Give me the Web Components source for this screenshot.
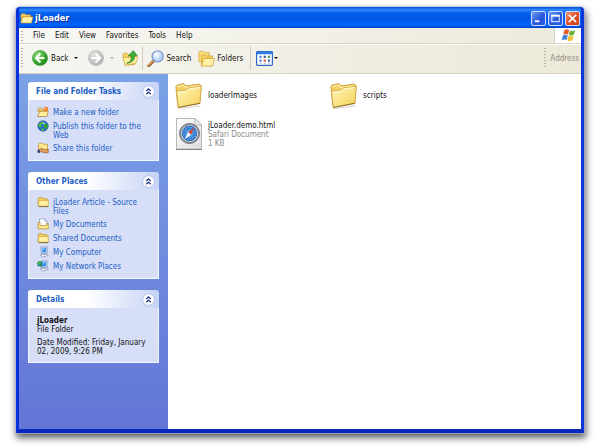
<!DOCTYPE html>
<html lang="en">
<head>
<meta charset="utf-8">
<title>jLoader</title>
<style>
  html, body { margin: 0; background: #fff; }
  body {
    min-height: 100vh; box-sizing: border-box; padding: 7px 16px 13px 16px;
    display: flex; flex-direction: column;
    font: 8px/9px "DejaVu Sans Condensed", "DejaVu Sans", sans-serif; color: #111;
  }
</style>
</head>
<body>
<xp-window>
  <xp-titlebar slot="title">jLoader</xp-titlebar>
  <xp-menubar slot="bars">
    <button>File</button><button>Edit</button><button>View</button><button>Favorites</button><button>Tools</button><button>Help</button>
  </xp-menubar>
  <xp-toolbar slot="bars"></xp-toolbar>
  <xp-panel slot="side" heading="File and Folder Tasks">
    <xp-link icon="newfolder">Make a new folder</xp-link>
    <xp-link icon="globe">Publish this folder to the Web</xp-link>
    <xp-link icon="share">Share this folder</xp-link>
  </xp-panel>
  <xp-panel slot="side" heading="Other Places">
    <xp-link icon="smallfolder">jLoader Article - Source Files</xp-link>
    <xp-link icon="docs">My Documents</xp-link>
    <xp-link icon="smallfolder">Shared Documents</xp-link>
    <xp-link icon="computer">My Computer</xp-link>
    <xp-link icon="network">My Network Places</xp-link>
  </xp-panel>
  <xp-panel slot="side" heading="Details">
    <xp-details name="jLoader" kind="File Folder">Date Modified: Friday, January 02, 2009, 9:26 PM</xp-details>
  </xp-panel>
  <xp-file icon="folder" name="loaderImages"></xp-file>
  <xp-file icon="folder" name="scripts"></xp-file>
  <xp-file icon="safari" name="jLoader.demo.html" kind="Safari Document" size="1 KB"></xp-file>
</xp-window>

<script>
const folderSmall = `
  <path d="M1.500 4 2.500 2h4l1.500 1.500h5.500l1 1.500v8.500H1.500z" fill="#f2cf63" stroke="#b58a2c" stroke-width=".9"/>
  <path d="M2.500 6h12.500v7.500H2z" fill="#fff0a3" stroke="#d0a33c" stroke-width=".8"/>
  <path d="M2.500 14.200h12.500" stroke="#70521a" stroke-width="1"/>`;
const monitor = `
  <path d="M5 1.500 13.500 1v8.500L6 10.500z" fill="#cfdcf2" stroke="#7388b0" stroke-width=".9"/>
  <path d="M6.500 3 12 2.600v5.400L7 8.800z" fill="#2e8ef0"/>
  <path d="M7 3.200 11 2.900 7.300 7z" fill="#8fd0ff"/>
  <path d="M4 12 12 10.500l3 2-8 2.500z" fill="#e8edf6" stroke="#6f7d98" stroke-width=".8"/>`;
const icons = {
  titlefolder: [16, `
    <path d="M1 4 2 2h4l1.500 1.500H13V6H1z" fill="#f7d36a" stroke="#c98d1f" stroke-width=".8"/>
    <path d="M1 13.500 3.500 6H16l-2 7.500z" fill="#fff2a8" stroke="#d39b28" stroke-width=".8"/>
    <path d="M1 4v9l2-7" fill="#e9b540"/>`],
  smallfolder: [16, folderSmall],
  newfolder: [16, `
    <path d="M1 5 2.500 3h4L8 4.500h5V7H1z" fill="#f4d169" stroke="#a87b25" stroke-width=".8"/>
    <path d="M1 14 3.500 7H15l-2 7z" fill="#ffef9e" stroke="#a87b25" stroke-width=".9"/>
    <circle cx="12" cy="4" r="3" fill="#f1732c"/><circle cx="11.500" cy="3.500" r="1.300" fill="#ffd28a"/>`],
  globe: [16, `
    <circle cx="8" cy="8" r="7" fill="#2565d2" stroke="#1b4893" stroke-width=".7"/>
    <path d="M3 4.500Q6 1 9 2.500L8 5 5.500 6 6.500 9 4 10 1.500 8z" fill="#4cc040"/>
    <path d="M10 4l3.500 1 1 4-2 3.500-2.500-2L8.500 8z" fill="#35a334"/>
    <path d="M5 11.500 8.500 11l1 3-3 .5z" fill="#4cc040"/><circle cx="9" cy="4.500" r="1.300" fill="#bfe3ff"/>`],
  share: [16, `
    <path d="M2 3 3 1.500h4L8.500 3H14v8H2z" fill="#ffe98c" stroke="#b58a2c" stroke-width=".9"/>
    <path d="M1 11.500 4 9h4l3 1.500 4-1V14l-5 .5-4-1.500H1z" fill="#e8a05a" stroke="#7a4a22" stroke-width=".8"/>
    <path d="M1 10.500h3v4H1z" fill="#3b4a7c"/>`],
  docs: [16, `
    <path d="M3.500 1h6.500l3 3v8h-9.500z" fill="#fff" stroke="#7f92b8" stroke-width=".9"/>
    <path d="M10 1v3h3" fill="#cfdcf2" stroke="#7f92b8" stroke-width=".7"/>
    <path d="M1.500 6H4v4h9V7h2v7.500H1.500z" fill="#ffe98c" stroke="#b0822a" stroke-width=".9"/>`],
  computer: [16, monitor],
  network: [16, `${monitor}
    <circle cx="4" cy="5" r="3.800" fill="#2a7bd0"/><path d="M1 3Q4 0 6 2L5 5 3 6.500 1 6z" fill="#46b53c"/>
    <path d="M3 7 6 5.500 7 8l-2 1z" fill="#2f8f2f"/>`],
  folder: [32, `
    <defs><linearGradient id="f" x2="1" y2="1"><stop stop-color="#fff8b8"/><stop offset="1" stop-color="#f4d05a"/></linearGradient></defs>
    <path d="M3 31 30 27.500V29L4 32z" fill="#c9c4b6" opacity=".7"/>
    <path d="M1 5.500 2.500 3.500 10.500 1.800 13 4.500 29 2.500 31 4.500 29.500 25 3.500 29.500z" fill="#f3cf63" stroke="#c89a35" stroke-width="1"/>
    <path d="M2.500 5.500 10 3.800 12.500 6.500 28.500 4.300" fill="none" stroke="#fff3b0" stroke-width="1.200"/>
    <path d="M2 12.500Q2 11.300 3.200 11L13 9.600l3-2.600L30 5.200l1 1L29.500 25 4 30z" fill="url(#f)" stroke="#d0a13a" stroke-width=".9"/>
    <path d="M3.200 12.300 13.500 10.800 16.500 8.200 29.500 6.500" fill="none" stroke="#fffde0" stroke-width="1"/>
    <path d="M4 30.300 29.700 25.300" stroke="#80641f" stroke-width="1"/>`],
  safari: [32, `
    <defs><radialGradient id="s"><stop stop-color="#74c4f7"/><stop offset="1" stop-color="#1d62bd"/></radialGradient>
    <linearGradient id="p" x2="1" y2="1"><stop stop-color="#fff"/><stop offset="1" stop-color="#dcdcdc"/></linearGradient></defs>
    <path d="M3.500.500H22l6.500 6.500V31H3.500z" fill="url(#p)" stroke="#b8b8b8"/>
    <path d="M3 31.500H29" stroke="#858585"/>
    <path d="M22 .500v6.500h6.500z" fill="#f4f4f4" stroke="#a8a8a8" stroke-width=".8"/>
    <circle cx="16.500" cy="15.500" r="10" fill="#858b93" stroke="#60666e" stroke-width=".8"/>
    <circle cx="16.500" cy="15.500" r="8.600" fill="#d6dde4"/>
    <circle cx="16.500" cy="15.500" r="7.700" fill="url(#s)"/>
    <circle cx="16.500" cy="15.500" r="6.200" fill="none" stroke="#d8efff" stroke-width="1" stroke-dasharray=".8 1.900"/>
    <path d="M21.500 9.500 17.800 16.800 15.200 14.200z" fill="#e33b2e"/><path d="M11.500 21.500 15.200 14.200l2.600 2.600z" fill="#fff"/>`],
  back: [20, `
    <defs><radialGradient id="b" cx=".35" cy=".3" r=".8"><stop stop-color="#8fe07c"/><stop offset=".6" stop-color="#36a82c"/><stop offset="1" stop-color="#1c7d1a"/></radialGradient></defs>
    <circle cx="10" cy="10" r="9.500" fill="url(#b)" stroke="#2b8a2a" stroke-width=".6"/>
    <path d="M10.500 4.500 5 10l5.500 5.500M5.500 10h10" fill="none" stroke="#fff" stroke-width="2.600"/>`],
  forward: [20, `
    <defs><radialGradient id="b" cx=".35" cy=".3" r=".8"><stop stop-color="#e2e2e0"/><stop offset="1" stop-color="#adadab"/></radialGradient></defs>
    <circle cx="10" cy="10" r="9.500" fill="url(#b)" stroke="#a9a9a6" stroke-width=".6"/>
    <path d="M9.500 4.500 15 10l-5.500 5.500M14.500 10h-10" fill="none" stroke="#fff" stroke-width="2.600"/>`],
  up: [20, `
    <path d="M1 5 6 3.500 8 5.500 17 5l-1 13L4 19z" fill="#f4d365" stroke="#c6982f" stroke-width=".8"/>
    <path d="M1 9 4 19l13-2 3-9-9 1.500z" fill="#fff0a0" stroke="#c6982f" stroke-width=".8"/>
    <path d="M6 16.500Q12.500 15 11.800 7.500H8L14 .800 19 7h-3.500Q16 15.500 6 16.500z" fill="#3fb534" stroke="#1d7c1c" stroke-width=".9"/>`],
  search: [20, `
    <defs><radialGradient id="g" cx=".4" cy=".35"><stop stop-color="#fff"/><stop offset="1" stop-color="#b5d3fa"/></radialGradient></defs>
    <path d="M8 12.500 2 18.500" stroke="#8c5a2c" stroke-width="3.400" stroke-linecap="round"/>
    <path d="M7.500 12.500 1.800 18" stroke="#eeb06a" stroke-width="1.500" stroke-linecap="round"/>
    <circle cx="12.500" cy="7.500" r="6.500" fill="url(#g)" stroke="#8a9cd0" stroke-width="1.600"/>`],
  folders: [20, `
    <path d="M1 3 2 1.500h4L7.500 3H13v11H1z" fill="#fbe07c" stroke="#cf9f38" stroke-width=".8"/>
    <path d="M4 19V7l1-1.500h4L10.500 7H17v3" fill="#f6cf5e" stroke="#cf9f38" stroke-width=".8"/>
    <path d="M4 19 7 10h12.500L17 19z" fill="#fff2a6" stroke="#cf9f38" stroke-width=".9"/>`],
  views: [20, `
    <rect x=".7" y="2" width="18.600" height="16" rx="1" fill="#fff" stroke="#2f66c8" stroke-width="1.400"/>
    <path d="M1 3.500h18" stroke="#2f7be6" stroke-width="3"/>
    <g stroke-width="2.600"><path d="M4 8h2.600M4 12.500h2.600" stroke="#4f86d8"/><path d="M9 8h2.600" stroke="#39588f"/><path d="M9 12.500h2.600" stroke="#de5b33"/><path d="M14 8h2.600" stroke="#4d9c50"/><path d="M14 12.500h2.600" stroke="#3c63b4"/></g>
    <path d="M4 15.500h2.600M9 15.500h2.600M14 15.500h2.600" stroke="#9db0d0"/>`],
  windows: [20, `
    <path d="M4.500 3Q7.500.500 11 2.700L9.300 8.700Q6 7 2.800 9z" fill="#e8592b"/>
    <path d="M12 3.200q3.500 1.800 7-.4L17.200 9q-3.400 2-6.800.2z" fill="#6cb33e"/>
    <path d="M2.500 10.200q3-2 6.500-.3L7.300 16Q4 14.300.800 16.300z" fill="#3f82dc"/>
    <path d="M10 10.300q3.400 1.900 6.900-.2L15.200 16.300q-3.500 2-6.900.2z" fill="#f5bf2e"/>`],
  chevrons: [14, `
    <circle cx="7" cy="7" r="6.300" fill="#fff" stroke="#b0bfe4" stroke-width="1"/>
    <path d="M4.500 6.500 7 4.200 9.500 6.500M4.500 10 7 7.700 9.500 10" fill="none" stroke="#2c3f8c" stroke-width="1.400"/>`],
  minimize: [12, `<path d="M2 9h5" stroke="#fff" stroke-width="2"/>`],
  maximize: [12, `<rect x="2" y="2.500" width="8" height="7" fill="none" stroke="#fff"/><path d="M1.500 3h9" stroke="#fff" stroke-width="2"/>`],
  close: [12, `<path d="M2 2l8 8M10 2l-8 8" stroke="#fff" stroke-width="1.800"/>`]
};

function define(tag, render) {
  customElements.define(tag, class extends HTMLElement {
    connectedCallback() {
      if (this.shadowRoot) return;
      this.attachShadow({ mode: "open" }).innerHTML = render(this);
    }
  });
}

const reset = `*{box-sizing:border-box} button{font:inherit;color:inherit;background:none;border:0;padding:0;margin:0;display:flex;align-items:center;white-space:nowrap}`;
const grip = `.grip{width:2px;align-self:stretch;background:repeating-linear-gradient(#b9b6a6 0 1px,transparent 1px 3px)}`;

define("xp-icon", el => {
  const [size, art] = icons[el.getAttribute("name")];
  return `<style>:host{display:block;flex:none;width:var(--s,12px);height:var(--s,12px)} svg{display:block;width:100%;height:100%}</style>
    <svg viewBox="0 0 ${size} ${size}" aria-hidden="true">${art}</svg>`;
});

define("xp-window", () => `<style>${reset}
  :host{flex:1;display:flex;flex-direction:column;box-sizing:border-box;background:#0a4be0;
    border:solid #0831d9;border-width:0 3px 4px;border-right-color:#0938d8;border-bottom-color:#0a28bd;border-radius:4px 4px 0 0;
    box-shadow:0 0 0 1px rgba(170,180,220,.6),1px 4px 7px 1px rgba(0,0,0,.62)}
  .main{flex:1;display:flex;background:#fff}
  aside{width:149px;flex:none;padding:8px 9px 20px;display:flex;flex-direction:column;gap:11px;
    background:linear-gradient(#7ba2e7,#6375d6)}
  main{flex:1;display:grid;grid-template-columns:repeat(auto-fill,155px);grid-auto-rows:32px;row-gap:7px;align-content:start;padding:5px 7px}
  </style>
  <slot name="title"></slot><slot name="bars"></slot>
  <div class="main"><aside><slot name="side"></slot></aside><main><slot></slot></main></div>`);

define("xp-titlebar", () => `<style>${reset}
  :host{display:flex;align-items:center;gap:2px;height:21px;box-sizing:border-box;padding:2px 1px 0;border-radius:4px 4px 0 0;
    background:linear-gradient(#0a4fd0,#2f8bff 3px,#0560f0 6px,#0057e5 12px,#0066ff 18px,#0043c8);
    color:#fff;font-size:9px;font-weight:bold;text-shadow:1px 1px #0b2f93}
  span{flex:1}
  xp-icon{--s:13px}
  button{width:15px;height:15px;justify-content:center;border:1px solid #cfdcff;border-radius:2px;background:linear-gradient(135deg,#6f9bf5,#2456d8 60%,#2d62e8)}
  button xp-icon{--s:11px}
  .close{background:linear-gradient(135deg,#f09a7c,#dd5227 50%,#c84018)}
  .controls{display:flex;gap:2px}
  </style><xp-icon name="titlefolder"></xp-icon><span><slot></slot></span>
  <div class="controls"><button aria-label="Minimize"><xp-icon name="minimize"></xp-icon></button>
  <button aria-label="Maximize"><xp-icon name="maximize"></xp-icon></button>
  <button class="close" aria-label="Close"><xp-icon name="close"></xp-icon></button></div>`);

define("xp-menubar", () => `<style>${reset}${grip}
  :host{display:flex;align-items:center;height:16px;background:linear-gradient(90deg,#f7f7f4,#edeadb);border-bottom:1px solid #d8d4c2;box-sizing:border-box}
  .grip{margin:3px 10px 2px 2px}
  nav{flex:1;display:flex;gap:10px}
  ::slotted(button){font:inherit;color:inherit;background:none;border:0;padding:0;margin:0}
  .logo{align-self:stretch;display:flex;align-items:center;justify-content:center;width:27px;background:#fff;border-left:1px solid #d8d4c2}
  .logo xp-icon{--s:15px}
  </style><i class="grip"></i><nav><slot></slot></nav><div class="logo"><xp-icon name="windows"></xp-icon></div>`);

define("xp-toolbar", () => `<style>${reset}${grip}
  :host{display:flex;align-items:center;height:30px;box-sizing:border-box;padding:0 2px 2px 2px;
    background:linear-gradient(90deg,#f5f5f2,#ece9d8);border-top:1px solid #fff;border-bottom:1px solid #d8d2bd}
  .grip{margin:3px 0}
  button{gap:3px}
  xp-icon{--s:16px}
  .arrow{width:0;height:0;border:solid transparent;border-width:2px 2px 0;border-top-color:#111}
  .off{border-top-color:#b8b5a8}
  .sep{width:1px;align-self:stretch;margin:1px 0;background:#d0ccba}
  .back{margin-left:9px}.back .arrow{margin-left:3px}
  .fwd{margin-left:10px;gap:6px}.up{margin:0 4px 0 8px}
  .search,.folders{gap:2px}
  .search{margin-left:4px}.folders{margin:0 7px}.views{margin-left:5px;gap:1px}
  .views xp-icon,.folders xp-icon,.search xp-icon{--s:17px}
  .space{flex:1}
  .address{color:#8f8c80;margin-left:4px}
  </style><i class="grip"></i>
  <button class="back"><xp-icon name="back"></xp-icon>Back<i class="arrow"></i></button>
  <button class="fwd" aria-label="Forward"><xp-icon name="forward"></xp-icon><i class="arrow off"></i></button>
  <button class="up" aria-label="Up"><xp-icon name="up"></xp-icon></button><i class="sep"></i>
  <button class="search"><xp-icon name="search"></xp-icon>Search</button>
  <button class="folders"><xp-icon name="folders"></xp-icon>Folders</button><i class="sep"></i>
  <button class="views" aria-label="Views"><xp-icon name="views"></xp-icon><i class="arrow"></i></button>
  <i class="space"></i><i class="grip"></i><span class="address">Address</span>`);

define("xp-panel", el => `<style>${reset}
  :host{display:block}
  header{display:flex;align-items:center;justify-content:space-between;height:18px;padding:1px 4px 0 8px;border-radius:3px 3px 0 0;
    background:linear-gradient(90deg,#fff 45%,#c6d3f7)}
  h2{margin:0;font:inherit;font-weight:bold;color:#215dc6;white-space:nowrap}
  button xp-icon{--s:13px}
  .body{background:#d6dff7;border:1px solid #f4f7ff;border-top:0;padding:6px 8px;display:flex;flex-direction:column;gap:2px}
  </style><header><h2>${el.getAttribute("heading")}</h2><button aria-label="Collapse"><xp-icon name="chevrons"></xp-icon></button></header>
  <div class="body"><slot></slot></div>`);

define("xp-link", el => `<style>
  :host{display:block}
  a{display:flex;gap:4px;color:#215dc6;text-decoration:none}
  span{padding-top:2px}
  </style><a href="#"><xp-icon name="${el.getAttribute("icon")}"></xp-icon><span><slot></slot></span></a>`);

define("xp-details", el => `<style>:host{display:block;padding-top:2px} p{margin:0 0 4px} p:last-child{margin:0}</style>
  <p><b>${el.getAttribute("name")}</b><br>${el.getAttribute("kind")}</p><p><slot></slot></p>`);

define("xp-file", el => {
  const kind = el.getAttribute("kind");
  return `<style>:host{display:flex;align-items:center;gap:6px;white-space:nowrap} xp-icon{--s:${kind ? 32 : 27}px;margin:0 ${kind ? "-3px 0 -2px" : "0"}} small{display:block;font-size:inherit;color:#8a8a8a}</style>
    <xp-icon name="${el.getAttribute("icon")}"></xp-icon><div>${el.getAttribute("name")}${kind ? `<small>${kind}</small><small>${el.getAttribute("size")}</small>` : ""}</div>`;
});
</script>
</body>
</html>
